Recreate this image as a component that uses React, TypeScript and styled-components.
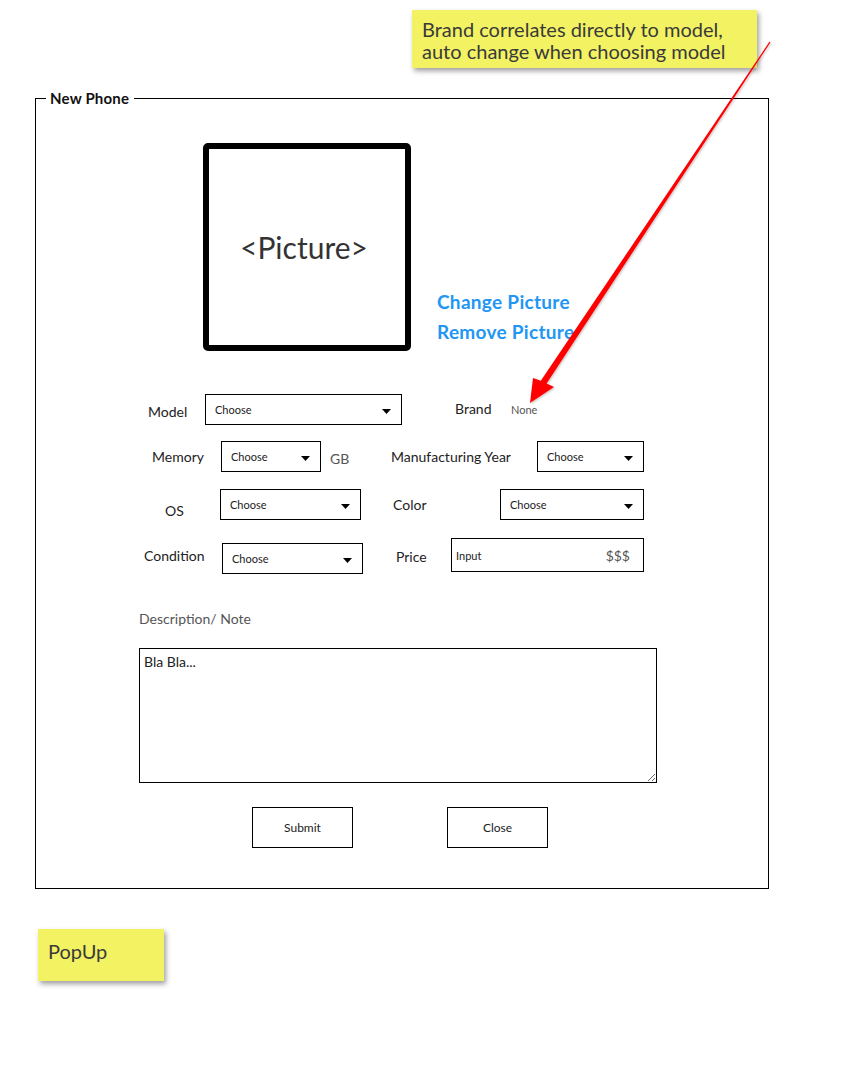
import React from "react";
import styled, { createGlobalStyle } from "styled-components";

const GlobalStyle = createGlobalStyle`
  html, body { margin: 0; padding: 0; background: #fff; }
  body { font-family: Lato, "Open Sans", sans-serif; color: #222; }
  * { box-sizing: border-box; }
`;

const Page = styled.div`
  position: relative;
  width: 843px;
  min-height: 1091px;
  padding-top: 10px;
`;

const StickyNote = styled.div<{ $ml: number; $mt: number; $w: number; $h: number; $pt: number; $lh: number }>`
  margin-left: ${(p) => p.$ml}px;
  margin-top: ${(p) => p.$mt}px;
  width: ${(p) => p.$w}px;
  height: ${(p) => p.$h}px;
  background: #f2f263;
  box-shadow: 2px 3px 5px rgba(0, 0, 0, 0.38);
  padding: ${(p) => p.$pt}px 10px 0 10px;
  font-size: 20px;
  line-height: ${(p) => p.$lh}px;
  color: #3a3a3a;
`;

const Frame = styled.fieldset`
  margin: 20px 0 0 35px;
  width: 734px;
  min-inline-size: 0;
  border: 1px solid #000;
  padding: 0 0 40px 0;
`;

const FrameTitle = styled.legend`
  margin-left: 10px;
  padding: 0 5px 0 4px;
  font-size: 15px;
  font-weight: 700;
  line-height: 20px;
  letter-spacing: 0.2px;
  color: #111;
`;

const PictureRow = styled.div`
  display: flex;
  align-items: flex-end;
  margin-top: 35px;
  padding-left: 167px;
`;

const PictureBox = styled.div`
  width: 208px;
  height: 208px;
  border: 6px solid #000;
  border-radius: 5px;
  display: flex;
  align-items: center;
  justify-content: center;
  font-size: 30px;
  color: #333;
  padding-right: 6px;
`;

const PictureLinks = styled.div`
  display: flex;
  flex-direction: column;
  margin-left: 26px;
  margin-bottom: 4px;
`;

const LinkText = styled.a`
  font-size: 19px;
  font-weight: 700;
  line-height: 30px;
  letter-spacing: 0.3px;
  color: #2196f3;
  text-decoration: none;
  cursor: pointer;
`;

const FieldRow = styled.div<{ $mt: number; $h: number }>`
  display: flex;
  align-items: flex-start;
  height: ${(p) => p.$h}px;
  margin-top: ${(p) => p.$mt}px;
`;

const FieldLabel = styled.span<{ $w: number; $ml?: number; $mt?: number }>`
  flex: none;
  width: ${(p) => p.$w}px;
  margin-left: ${(p) => p.$ml ?? 0}px;
  margin-top: ${(p) => p.$mt ?? 0}px;
  font-size: 14px;
  line-height: 20px;
  color: #222;
  white-space: nowrap;
`;

const Hint = styled.span<{ $w?: number; $ml?: number; $mt?: number; $size: number }>`
  flex: none;
  ${(p) => (p.$w ? `width: ${p.$w}px;` : "")}
  margin-left: ${(p) => p.$ml ?? 0}px;
  margin-top: ${(p) => p.$mt ?? 0}px;
  font-size: ${(p) => p.$size}px;
  line-height: ${(p) => Math.round(p.$size * 1.35)}px;
  color: #555;
  white-space: nowrap;
`;

const SelectBox = styled.div<{ $w: number; $h?: number; $ml?: number; $mt?: number; $pl?: number }>`
  flex: none;
  width: ${(p) => p.$w}px;
  height: ${(p) => p.$h ?? 31}px;
  margin-left: ${(p) => p.$ml ?? 0}px;
  margin-top: ${(p) => p.$mt ?? 0}px;
  border: 1px solid #000;
  background: #fff;
  display: flex;
  align-items: center;
  justify-content: space-between;
  padding: 0 10px 0 ${(p) => p.$pl ?? 9}px;
  font-size: 11px;
  color: #222;
`;

const Caret = styled.svg`
  margin-top: 3px;
  flex: none;
`;

const PriceTag = styled.span`
  font-size: 14px;
  color: #555;
  padding-right: 3px;
`;

const SectionLabel = styled.div`
  margin: 36px 0 0 103px;
  font-size: 14px;
  line-height: 20px;
  color: #555;
`;

const NoteArea = styled.textarea`
  display: block;
  margin: 19px 0 0 103px;
  width: 518px;
  height: 135px;
  border: 1px solid #000;
  border-radius: 0;
  padding: 4px 4px;
  font-family: Lato, "Open Sans", sans-serif;
  font-size: 14px;
  line-height: 18px;
  color: #222;
  resize: both;
  outline: none;
`;

const ButtonRow = styled.div`
  display: flex;
  margin-top: 24px;
  padding-left: 216px;
  gap: 94px;
`;

const ActionButton = styled.button`
  width: 101px;
  height: 41px;
  border: 1px solid #000;
  border-radius: 0;
  background: #fff;
  font-family: Lato, "Open Sans", sans-serif;
  font-size: 12px;
  color: #222;
  padding: 0;
`;

const ArrowLayer = styled.svg`
  position: absolute;
  left: 0;
  top: 0;
  pointer-events: none;
`;

const Select = ({ w, ml, mt }: { w: number; ml?: number; mt?: number }) => (
  <SelectBox $w={w} $ml={ml} $mt={mt}>
    <span>Choose</span>
    <Caret width="9" height="5" viewBox="0 0 9 5">
      <polygon points="0,0 9,0 4.5,5" fill="#000" />
    </Caret>
  </SelectBox>
);

export default function App() {
  return (
    <Page>
      <GlobalStyle />
      <StickyNote $ml={412} $mt={0} $w={345} $h={58} $pt={8} $lh={22}>
        Brand correlates directly to model,
        <br />
        auto change when choosing model
      </StickyNote>

      <Frame>
        <FrameTitle>New Phone</FrameTitle>
        <PictureRow>
          <PictureBox>&lt;Picture&gt;</PictureBox>
          <PictureLinks>
            <LinkText>Change Picture</LinkText>
            <LinkText>Remove Picture</LinkText>
          </PictureLinks>
        </PictureRow>

        <FieldRow $mt={43} $h={31}>
          <FieldLabel $ml={112} $w={57} $mt={8}>Model</FieldLabel>
          <Select w={197} />
          <FieldLabel $ml={53} $w={56} $mt={5}>Brand</FieldLabel>
          <Hint $size={11} $mt={8}>None</Hint>
        </FieldRow>

        <FieldRow $mt={16} $h={31}>
          <FieldLabel $ml={116} $w={69} $mt={6}>Memory</FieldLabel>
          <Select w={100} />
          <Hint $size={14} $ml={9} $w={61} $mt={8}>GB</Hint>
          <FieldLabel $w={146} $mt={6}>Manufacturing Year</FieldLabel>
          <Select w={107} />
        </FieldRow>

        <FieldRow $mt={17} $h={31}>
          <FieldLabel $ml={129} $w={55} $mt={12}>OS</FieldLabel>
          <Select w={141} />
          <FieldLabel $ml={32} $w={107} $mt={6}>Color</FieldLabel>
          <Select w={144} />
        </FieldRow>

        <FieldRow $mt={18} $h={35}>
          <FieldLabel $ml={108} $w={78} $mt={8}>Condition</FieldLabel>
          <Select w={141} mt={5} />
          <FieldLabel $ml={33} $w={55} $mt={9}>Price</FieldLabel>
          <SelectBox $w={193} $h={34} $pl={4}>
            <span>Input</span>
            <PriceTag>$$$</PriceTag>
          </SelectBox>
        </FieldRow>

        <SectionLabel>Description/ Note</SectionLabel>
        <NoteArea defaultValue="Bla Bla..." />

        <ButtonRow>
          <ActionButton>Submit</ActionButton>
          <ActionButton>Close</ActionButton>
        </ButtonRow>
      </Frame>

      <StickyNote $ml={38} $mt={40} $w={126} $h={52} $pt={10} $lh={24}>
        PopUp
      </StickyNote>

      <ArrowLayer width="843" height="1091" viewBox="0 0 843 1091">
        <defs>
          <filter id="arrowShadow" x="-10%" y="-10%" width="120%" height="120%">
            <feDropShadow dx="1" dy="1" stdDeviation="1.2" floodColor="#000" floodOpacity="0.25" />
          </filter>
        </defs>
        <polygon
          filter="url(#arrowShadow)"
          fill="#ff0000"
          points="769.6,41.6 770.4,42.4 546.6,383.4 554,387 530,403 533,378 540.8,380.8"
        />
      </ArrowLayer>
    </Page>
  );
}
